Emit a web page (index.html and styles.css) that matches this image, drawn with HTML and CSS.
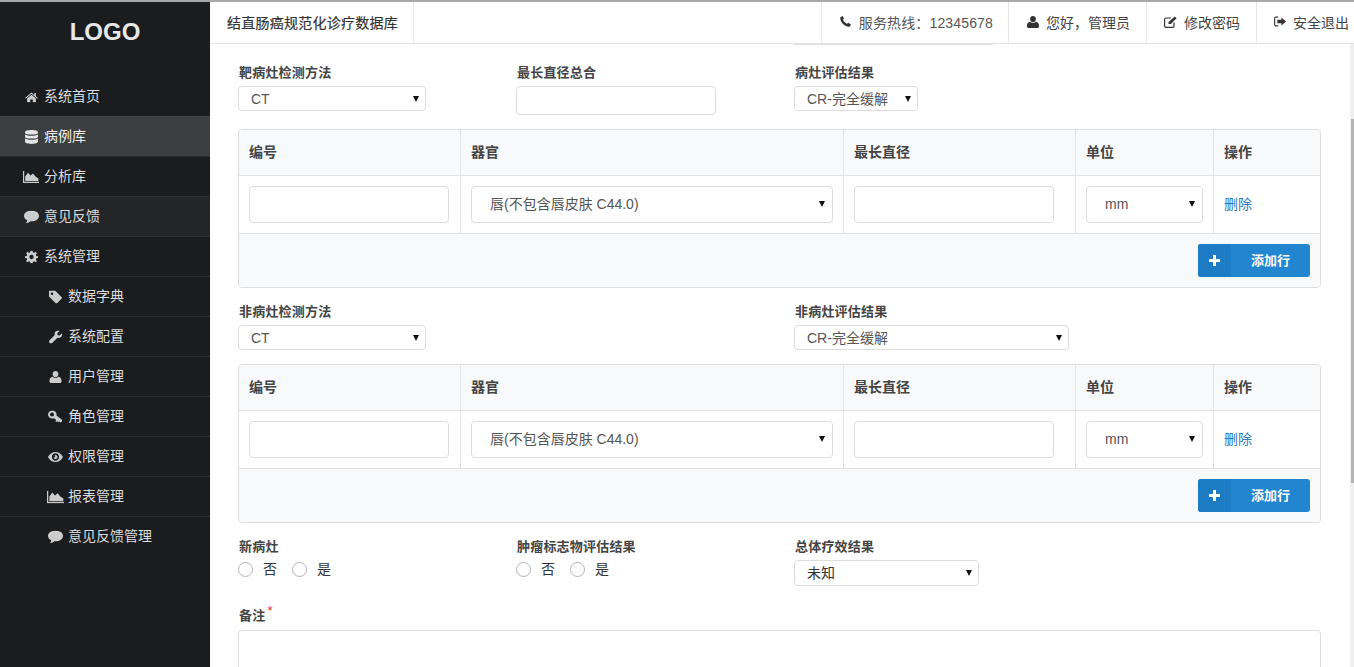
FILE: index.html
```html
<!DOCTYPE html>
<html lang="zh">
<head>
<meta charset="utf-8">
<title>结直肠癌规范化诊疗数据库</title>
<link rel="stylesheet" href="styles.css">
</head>
<body>
<svg class="defs" width="0" height="0" aria-hidden="true">
  <defs>
    <symbol id="i-home" viewBox="0 0 14 12"><path d="M7 1 0 7l.7.8L7 2.400l6.300 5.400.7-.8-2.200-1.900V1.600h-1.700v2.100zM2.200 7.600V12h3.400V8.600h2.800V12h3.400V7.600L7 3.600z"/></symbol>
    <symbol id="i-db" viewBox="0 0 13 14"><path d="M6.500 0C10 0 13 .8 13 2.100v.6C13 4 10 4.600 6.500 4.600S0 4 0 2.700v-.6C0 .8 3 0 6.500 0zM0 4.400C1.200 5.300 3.700 5.700 6.500 5.700S11.800 5.300 13 4.400v2.300C13 8 10 8.600 6.500 8.600S0 8 0 6.700zM0 8.400C1.200 9.300 3.700 9.700 6.500 9.700S11.800 9.300 13 8.400v3.200C13 13.200 10 14 6.500 14S0 13.200 0 11.600z"/></symbol>
    <symbol id="i-chart" viewBox="0 0 16 12"><path d="M0 0h1.200v10.800H16V12H0z"/><path d="M2.200 10 2.200 5.500 5 1.800 7.500 4.600 10 2.400 12.500 5.500 15.400 7.500V10z"/></symbol>
    <symbol id="i-chat" viewBox="0 0 14 12"><path d="M7 0c3.900 0 7 2.200 7 5s-3.100 5-7 5h-1C4.800 11 3.200 11.800 1.500 12c.8-.8 1.400-1.700 1.500-3C1.200 8.100 0 6.700 0 5 0 2.200 3.100 0 7 0z"/></symbol>
    <symbol id="i-gear" viewBox="0 0 12 12"><path fill-rule="evenodd" d="M5 0h2l.3 1.700 1.100.5L9.800 1.200 11 2.500 10 3.900l.4 1.100L12 5.200v1.700l-1.600.3L10 8.200l1 1.400-1.200 1.300-1.400-1-1.100.4L7 12H5l-.3-1.700-1.100-.4-1.400 1L1 9.600l1-1.400-.4-1L0 6.900V5.200L1.600 5 2 3.900 1 2.500l1.200-1.300 1.400 1 1.100-.5zM6 4a2 2 0 1 0 0 4 2 2 0 0 0 0-4z"/></symbol>
    <symbol id="i-tag" viewBox="0 0 13 13"><path fill-rule="evenodd" d="M1 0h5l6.700 6.700c.4.400.4 1 0 1.400l-4.600 4.600c-.4.400-1 .4-1.400 0L0 6V1c0-.6.400-1 1-1zm2 2a1.300 1.300 0 1 0 0 2.600A1.300 1.300 0 0 0 3 2z"/></symbol>
    <symbol id="i-wrench" viewBox="0 0 13 13"><path d="M9.200 0c.6 0 1.100.1 1.600.3L8.300 2.800l.3 2 2 .3L13 2.700c.2.500.3 1 .1 1.500C13 6.100 11.500 7.400 9.600 7.400c-.4 0-.8-.1-1.200-.2l-5.200 5.200c-.7.800-1.900.8-2.600 0s-.8-1.900 0-2.600l5.200-5.200C5.700 4.100 5.600 3.800 5.600 3.400 5.600 1.500 7.200 0 9.200 0z"/></symbol>
    <symbol id="i-user" viewBox="0 0 12 12"><path d="M6 0c1.700 0 2.900 1.300 2.900 3S7.700 6.300 6 6.300 3.100 4.700 3.100 3 4.300 0 6 0zM3.300 5.800C4 6.600 5 7 6 7s2-.4 2.700-1.200c2 .2 3.300 1.600 3.300 3.700v1C12 11.400 11.300 12 10.500 12h-9C.7 12 0 11.400 0 10.500v-1c0-2.100 1.300-3.500 3.300-3.700z"/></symbol>
    <symbol id="i-key" viewBox="0 0 14 13"><path fill-rule="evenodd" d="M4.300 0C6.700 0 8.600 1.800 8.600 4c0 .4 0 .7-.1 1L14 9.200V11l-1.500 1-1.400-1.100-.9.800-1-.9-.9.800-1-.9.900-1-.9-.9-1.300-1.100c-.5.200-1 .3-1.600.3C1.900 8.100 0 6.300 0 4S1.900 0 4.300 0zM4 2a2 2 0 1 0 0 4 2 2 0 0 0 0-4z"/></symbol>
    <symbol id="i-eye" viewBox="0 0 15 10"><path fill-rule="evenodd" d="M7.500 0c3.300 0 6 2 7.500 5-1.500 3-4.200 5-7.500 5S1.500 8 0 5c1.500-3 4.200-5 7.500-5zm0 1.300C5.500 1.300 3.900 3 3.900 5s1.600 3.700 3.600 3.700S11.100 7 11.100 5 9.500 1.300 7.500 1.300zM7.500 3a2 2 0 1 1-1.900 2.500c.5.300 1.300 0 1.500-.5s0-1.300-.5-1.700c.3-.2.600-.3.900-.3z"/></symbol>
    <symbol id="i-phone" viewBox="0 0 11 11"><path d="M2.500 0 4 2.500 3 3.800c.6 1.600 2.200 3.300 4 4l1.300-1L11 8.500 9.600 10.700C5 11.300-.3 6 .3 1.300z"/></symbol>
    <symbol id="i-edit" viewBox="0 0 13 12"><path fill="none" stroke="currentColor" stroke-width="1.200" d="M10 6.500V10a1.400 1.400 0 0 1-1.400 1.400H2A1.400 1.400 0 0 1 .6 10V3.400A1.400 1.400 0 0 1 2 2h5"/><path d="M4.500 6 10.800.4l1.800 1.800L6.800 8H4.500z"/></symbol>
    <symbol id="i-logout" viewBox="0 0 13 11"><path fill="none" stroke="currentColor" stroke-width="1.200" d="M4.500.8H2A1.300 1.300 0 0 0 .7 2v7A1.300 1.300 0 0 0 2 10.200h2.500"/><path d="M8 1.200 13 5.500 8 9.800V7.300H3.600V3.700H8z"/></symbol>
    <symbol id="i-plus" viewBox="0 0 11 11"><path d="M4 0h3v4h4v3H7v4H4V7H0V4h4z"/></symbol>
  </defs>
</svg>
<aside class="sidebar">
  <div class="logo">LOGO</div>
  <nav class="menu">
    <a class="item"><svg class="ic ic-home"><use href="#i-home"/></svg>系统首页</a>
    <a class="item active"><svg class="ic ic-db"><use href="#i-db"/></svg>病例库</a>
    <a class="item"><svg class="ic ic-chart"><use href="#i-chart"/></svg>分析库</a>
    <a class="item soft"><svg class="ic ic-chat"><use href="#i-chat"/></svg>意见反馈</a>
    <a class="item"><svg class="ic ic-gear"><use href="#i-gear"/></svg>系统管理</a>
    <a class="item sub"><svg class="ic ic-tag"><use href="#i-tag"/></svg>数据字典</a>
    <a class="item sub"><svg class="ic ic-wrench"><use href="#i-wrench"/></svg>系统配置</a>
    <a class="item sub"><svg class="ic ic-user"><use href="#i-user"/></svg>用户管理</a>
    <a class="item sub"><svg class="ic ic-key"><use href="#i-key"/></svg>角色管理</a>
    <a class="item sub"><svg class="ic ic-eye"><use href="#i-eye"/></svg>权限管理</a>
    <a class="item sub"><svg class="ic ic-chart"><use href="#i-chart"/></svg>报表管理</a>
    <a class="item sub"><svg class="ic ic-chat"><use href="#i-chat"/></svg>意见反馈管理</a>
  </nav>
</aside>
<div class="main">
  <header class="topbar">
    <div class="brand">结直肠癌规范化诊疗数据库</div>
    <div class="tools">
      <a class="tool phone"><svg class="tic tic-phone"><use href="#i-phone"/></svg>服务热线：12345678</a>
      <a class="tool hello"><svg class="tic tic-user"><use href="#i-user"/></svg>您好，管理员</a>
      <a class="tool"><svg class="tic tic-edit"><use href="#i-edit"/></svg>修改密码</a>
      <a class="tool last"><svg class="tic tic-out"><use href="#i-logout"/></svg>安全退出</a>
    </div>
  </header>
  <div class="scroller">
    <div class="track"><div class="thumb"></div></div>
    <div class="content">
      <div class="cutoff"></div>
      <div class="row row-a">
        <div class="field"><label class="lbl">靶病灶检测方法</label><div class="sel sel-188"><span>CT</span></div></div>
        <div class="field"><label class="lbl">最长直径总合</label><div class="inp inp-200"></div></div>
        <div class="field"><label class="lbl">病灶评估结果</label><div class="sel sel-124"><span>CR-完全缓解</span></div></div>
      </div>
      <section class="panel">
        <div class="tr th"><div class="c c1"><span>编号</span></div><div class="c c2"><span>器官</span></div><div class="c c3"><span>最长直径</span></div><div class="c c4"><span>单位</span></div><div class="c c5"><span>操作</span></div></div>
        <div class="tr td">
          <div class="c c1"><div class="box fixed"></div></div>
          <div class="c c2"><div class="box caret organ">唇(不包含唇皮肤 C44.0)</div></div>
          <div class="c c3"><div class="box fixed"></div></div>
          <div class="c c4"><div class="box caret unit">mm</div></div>
          <div class="c c5"><a class="del">删除</a></div>
        </div>
        <div class="foot"><button class="add"><span class="add-ic"><svg class="plus"><use href="#i-plus"/></svg></span><span class="add-tx">添加行</span></button></div>
      </section>
      <div class="row row-b">
        <div class="field"><label class="lbl">非病灶检测方法</label><div class="sel sel-188"><span>CT</span></div></div>
        <div class="field"></div>
        <div class="field"><label class="lbl">非病灶评估结果</label><div class="sel sel-275"><span>CR-完全缓解</span></div></div>
      </div>
      <section class="panel">
        <div class="tr th"><div class="c c1"><span>编号</span></div><div class="c c2"><span>器官</span></div><div class="c c3"><span>最长直径</span></div><div class="c c4"><span>单位</span></div><div class="c c5"><span>操作</span></div></div>
        <div class="tr td">
          <div class="c c1"><div class="box fixed"></div></div>
          <div class="c c2"><div class="box caret organ">唇(不包含唇皮肤 C44.0)</div></div>
          <div class="c c3"><div class="box fixed"></div></div>
          <div class="c c4"><div class="box caret unit">mm</div></div>
          <div class="c c5"><a class="del">删除</a></div>
        </div>
        <div class="foot"><button class="add"><span class="add-ic"><svg class="plus"><use href="#i-plus"/></svg></span><span class="add-tx">添加行</span></button></div>
      </section>
      <div class="row row-c">
        <div class="field"><label class="lbl">新病灶</label><div class="radios"><span class="radio"></span><span class="opt">否</span><span class="radio"></span><span class="opt">是</span></div></div>
        <div class="field"><label class="lbl">肿瘤标志物评估结果</label><div class="radios"><span class="radio"></span><span class="opt">否</span><span class="radio"></span><span class="opt">是</span></div></div>
        <div class="field"><label class="lbl">总体疗效结果</label><div class="sel sel-185"><span class="dark">未知</span></div></div>
      </div>
      <label class="lbl note">备注<sup class="req">*</sup></label>
      <div class="textarea"></div>
    </div>
  </div>
</div>
</body>
</html>
```
FILE: styles.css
```css
* { box-sizing: border-box; }
html, body { margin: 0; height: 667px; overflow: hidden; }
body {
  display: flex;
  font-family: "Liberation Sans", "Noto Sans CJK SC", sans-serif;
  font-size: 14px;
  color: #333;
  background: #fff;
  border-top: 2px solid #a9a9a9;
}
.defs { position: absolute; }
.sidebar { width: 210px; flex: none; background: #1b1c1e; color: #e6e6e6; height: 665px; }
.logo { height: 54px; padding-top: 15px; text-align: center; font-size: 24px; line-height: 30px; font-weight: 700; color: #e8e8e8; }
.menu { display: flex; flex-direction: column; padding-top: 20px; }
.item { height: 40px; display: flex; align-items: center; padding: 0 0 3px 44px; position: relative; color: #ddd; border-top: 1px solid #2d2e30; }
.item:first-child { border-top-color: transparent; }
.item.active { background: #3d3e40; color: #f0f0f0; border-top-color: #47484a; }
.item.soft { background: #242527; border-top-color: #303133; }
.item.sub { padding-left: 68px; }
.ic { position: absolute; fill: #ccc; top: 50%; transform: translateY(-50%); }
.item:not(.sub) .ic-home { left: 25px; width: 13px; height: 11px; }
.item:not(.sub) .ic-db { left: 25px; width: 13px; height: 14px; fill: #e6e6e6; }
.item:not(.sub) .ic-chart { left: 23px; width: 16px; height: 12px; }
.item:not(.sub) .ic-chat { left: 24px; width: 15px; height: 13px; }
.item:not(.sub) .ic-gear { left: 25px; width: 13px; height: 13px; }
.sub .ic-tag { left: 49px; width: 13px; height: 13px; }
.sub .ic-wrench { left: 49px; width: 13px; height: 13px; }
.sub .ic-user { left: 49px; width: 13px; height: 12px; }
.sub .ic-key { left: 48px; width: 14px; height: 13px; }
.sub .ic-eye { left: 48px; width: 15px; height: 10px; }
.sub .ic-chart { left: 47px; width: 17px; height: 13px; }
.sub .ic-chat { left: 48px; width: 15px; height: 13px; }

.main { flex: 1; min-width: 0; display: flex; flex-direction: column; height: 665px; }
.topbar { height: 42px; flex: none; display: flex; justify-content: space-between; border-bottom: 1px solid #e2e2e2; background: #fff; }
.brand { width: 204px; padding-left: 17px; line-height: 43px; letter-spacing: .25px; color: #333; border-right: 1px solid #e7e7e7; -webkit-text-stroke: .2px #333; }
.tools { display: flex; }
.tool { display: flex; align-items: center; height: 41px; border-left: 1px solid #e7e7e7; padding: 0 16px 2px 17px; color: #444; white-space: nowrap; position: relative; }
.tool.phone { padding-left: 18px; padding-right: 15px; letter-spacing: .15px; color: #555; }
.tool.hello { padding-left: 18px; }
.tool.last { padding-left: 17px; padding-right: 5px; }
.tic { width: 12px; height: 12px; fill: #333; color: #333; margin-right: 7px; flex: none; }
.tic-phone { width: 11px; height: 11px; margin-right: 8px; }
.tic-edit { width: 13px; height: 12px; }
.tic-out { width: 12px; height: 11px; }

.scroller { position: relative; flex: 1; min-height: 0; overflow: hidden; }
.track { position: absolute; top: 0; right: 0; bottom: 0; width: 4px; background: #efefef; z-index: 1; }
.thumb { position: absolute; top: 75px; left: 1px; width: 3px; height: 364px; background: #b5b5b5; }
.content { padding: 0 33px 0 28px; }
.cutoff { position: absolute; left: 584px; top: 0; width: 199px; height: 1px; background: #ddd; }
.row { display: flex; }
.field { flex: none; }
.field:nth-child(1) { width: 278px; }
.field:nth-child(2) { width: 278px; }
.lbl { display: block; padding-left: 1px; font-size: 13px; line-height: 16px; letter-spacing: .2px; font-weight: 700; color: #444; }
.row-a { padding-top: 21px; height: 85px; }
.row-b { padding-top: 16px; height: 76px; }
.row-c { padding-top: 16px; height: 85px; }
.sel { margin-top: 5px; height: 25px; border: 1px solid #ddd; border-radius: 4px; padding-left: 12px; line-height: 25px; color: #555; position: relative; font-size: 14px; }
.sel::after, .caret::after { content: ""; position: absolute; right: 6px; top: 9px; border: 3.500px solid transparent; border-top: 6px solid #111; border-bottom: 0; }
.sel-188 { width: 188px; }
.sel-124 { width: 124px; }
.sel-275 { width: 275px; }
.sel-185 { width: 185px; height: 26px; }
.dark { color: #333; }
.inp { margin-top: 5px; height: 29px; border: 1px solid #ddd; border-radius: 4px; }
.inp-200 { width: 200px; }
.panel { width: 1083px; border: 1px solid #ddd; border-radius: 4px; overflow: hidden; }
.tr { display: flex; border-bottom: 1px solid #e2e2e2; }
.th { height: 46px; background: #f8f9fb; font-size: 14px; font-weight: 700; color: #444; }
.th span { padding-bottom: 4px; }
.td { height: 58px; }
.c { border-right: 1px solid #e2e2e2; padding: 0 10px; display: flex; align-items: center; }
.c1 { width: 222px; }
.c2 { width: 383px; }
.c3 { width: 232px; }
.c4 { width: 138px; }
.c5 { width: 106px; border-right: 0; }
.box { width: 100%; height: 37px; border: 1px solid #ddd; border-radius: 4px; position: relative; line-height: 35px; color: #555; }
.box.fixed { width: 200px; }
.caret::after { top: 14px; right: 7px; }
.organ { padding-left: 18px; }
.unit { padding-left: 18px; }
.del { color: #2a79c2; padding-bottom: 4px; }
.foot { height: 53px; background: #f8f9fb; display: flex; justify-content: flex-end; padding: 10px 10px 0 0; }
.add { display: flex; width: 112px; height: 33px; padding: 0; border: 0; border-radius: 3px; overflow: hidden; background: #2185d0; color: #fff; font: 700 13px "Liberation Sans", "Noto Sans CJK SC", sans-serif; }
.add-ic { width: 33px; height: 33px; background: #1e7cc4; display: flex; align-items: center; justify-content: center; }
.plus { width: 11px; height: 11px; fill: #fff; }
.add-tx { flex: 1; line-height: 33px; text-align: center; }
.radios { display: flex; align-items: center; margin-top: 6px; height: 17px; color: #333; }
.radio { width: 15px; height: 15px; border: 1px solid #b5b5b5; border-radius: 50%; margin-right: 10px; }
.opt { margin-right: 15px; font-size: 14px; padding-bottom: 4px; }
.note { height: 17px; }
.req { color: #e33; font-size: 13px; line-height: 0; font-weight: 400; margin-left: 2px; }
.textarea { margin-top: 5px; width: 1083px; height: 100px; border: 1px solid #ddd; border-radius: 4px; }
```
